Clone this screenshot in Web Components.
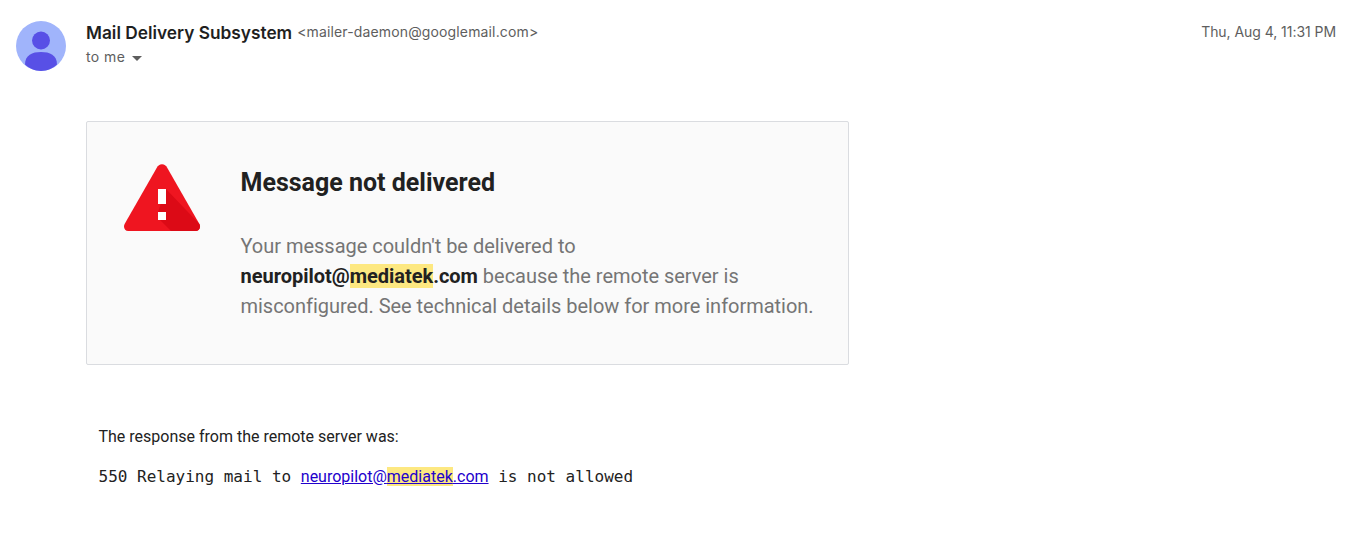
<!DOCTYPE html>
<html lang="en">
<head>
<meta charset="utf-8">
<title>Message not delivered</title>
<style>
  html, body { margin: 0; background: #fff; }
  body { font-family: Roboto, "Liberation Sans", sans-serif; color: #222; }
</style>
</head>
<body>
<mail-view>
  <mail-header slot="header" name="Mail Delivery Subsystem" address="&lt;mailer-daemon@googlemail.com&gt;" date="Thu, Aug 4, 11:31 PM"></mail-header>
  <bounce-card>
    <span slot="title">Message not delivered</span>
    Your message couldn't be delivered to <b>neuropilot@<mark-hit>mediatek</mark-hit>.com</b> because the remote server is misconfigured. See technical details below for more information.
  </bounce-card>
  <server-response>
    <span slot="intro">The response from the remote server was:</span>
    550 Relaying mail to <a href="#">neuropilot@<mark-hit>mediatek</mark-hit>.com</a> is not allowed
  </server-response>
</mail-view>

<template id="mail-view-tpl">
  <style>
    :host { display: block; height: 534px; overflow: hidden; padding: 20px 14px 0 16px; box-sizing: border-box; }
    .body { margin: 50px 0 0 70px; }
  </style>
  <slot name="header"></slot>
  <div class="body"><slot></slot></div>
</template>

<template id="mail-header-tpl">
  <style>
    :host { display: flex; align-items: flex-start; height: 51px; }
    svg.avatar { width: 50px; height: 50px; margin: 1px 20px 0 0; flex: none; }
    .who { flex: 1; padding-top: 2px; }
    .top { display: flex; align-items: flex-start; height: 21px; }
    .name { font: 600 17.3px/21px Inter, Roboto, sans-serif; color: #1f1f1f; margin-right: 5px; }
    .addr { font: 400 14px/19px Inter, Roboto, sans-serif; color: #5e5e5e; letter-spacing: .14px; }
    .to { display: flex; align-items: center; font: 400 14px/20px Inter, Roboto, sans-serif; color: #5e5e5e; margin-top: 4px; letter-spacing: .4px; }
    .to svg { width: 10px; height: 5px; margin: 3px 0 0 7px; }
    .date { font: 400 14px/21px Inter, Roboto, sans-serif; color: #5e5e5e; padding-top: 1px; letter-spacing: -.05px; }
  </style>
  <svg class="avatar" viewBox="0 0 50 50" aria-hidden="true">
    <circle cx="25" cy="25" r="25" fill="#a0b4fb"/>
    <circle cx="25" cy="19.5" r="9" fill="#5850e6"/>
    <path d="M9 43.6c0-9.6 7.200-12.600 16-12.600s16 3 16 12.600c-4.300 3.900-9.900 6.400-16 6.400s-11.700-2.500-16-6.400z" fill="#5850e6"/>
  </svg>
  <div class="who">
    <div class="top"><span class="name" id="name"></span><span class="addr" id="addr"></span></div>
    <div class="to">to me<svg viewBox="0 0 10 5" aria-hidden="true"><path d="M0 0h10L5 5z" fill="#5e5e5e"/></svg></div>
  </div>
  <div class="date" id="date"></div>
</template>

<template id="bounce-card-tpl">
  <style>
    :host { display: flex; box-sizing: border-box; width: 763px; height: 244px; background: #fafafa; border: 1px solid #dadce0; border-radius: 2px; padding: 43px 32px 0 37px; }
    svg { width: 78px; height: 70px; flex: none; margin: -1px 38.5px 0 0; }
    .text { flex: 1; }
    h2 { margin: 0; font: 700 25px/36px Roboto, sans-serif; color: #212121; }
    p { margin: 30px 0 0; font: 400 20px/30px Roboto, sans-serif; color: #757575; letter-spacing: -.02px; }
    ::slotted(b) { font-weight: 700; color: #212121; }
  </style>
  <svg viewBox="0 0 78 70" aria-hidden="true">
    <path d="M38 .3c2.500 0 4 1.400 5.200 3.400L75.400 60c1.600 3-.2 7-3.600 7H4.200c-3.400 0-5.200-4-3.600-7L32.800 3.700C34 1.700 35.500 .3 38 .3z" fill="#ef1520"/>
    <path d="M42 25l33.400 35c1.600 3-.2 7-3.600 7H47L34 54V48z" fill="#dc0a16"/>
    <rect x="34" y="25" width="8" height="15" fill="#fff"/>
    <rect x="34" y="48" width="8" height="8" fill="#fff"/>
  </svg>
  <div class="text">
    <h2><slot name="title"></slot></h2>
    <p><slot></slot></p>
  </div>
</template>

<template id="server-response-tpl">
  <style>
    :host { display: block; padding: 63px 0 0 12.5px; }
    .intro { font: 400 16px/18px Roboto, sans-serif; color: #222; }
    .mono { margin-top: 21px; font: 400 16px/20px "DejaVu Sans Mono", monospace; color: #222; }
    ::slotted(a) { font-family: Roboto, sans-serif; color: #2200cc; }
  </style>
  <div class="intro"><slot name="intro"></slot></div>
  <div class="mono"><slot></slot></div>
</template>

<script>
// copy a template into a fresh open shadow root
function mount(el, id) {
  const shadow = el.attachShadow({mode: 'open'});
  shadow.append(document.getElementById(id).content.cloneNode(true));
  return shadow;
}

customElements.define('mail-view', class extends HTMLElement {
  constructor() { super(); mount(this, 'mail-view-tpl'); }
});

customElements.define('mail-header', class extends HTMLElement {
  constructor() { super(); mount(this, 'mail-header-tpl'); }
  connectedCallback() {
    for (const key of ['name', 'addr', 'date']) {
      const attr = key === 'addr' ? 'address' : key;
      this.shadowRoot.getElementById(key).textContent = this.getAttribute(attr);
    }
  }
});

customElements.define('bounce-card', class extends HTMLElement {
  constructor() { super(); mount(this, 'bounce-card-tpl'); }
});

customElements.define('server-response', class extends HTMLElement {
  constructor() { super(); mount(this, 'server-response-tpl'); }
});

customElements.define('mark-hit', class extends HTMLElement {
  constructor() {
    super();
    this.attachShadow({mode: 'open'}).innerHTML =
      '<style>:host { display: inline; background: #fde881; }</style><slot></slot>';
  }
});
</script>
</body>
</html>
